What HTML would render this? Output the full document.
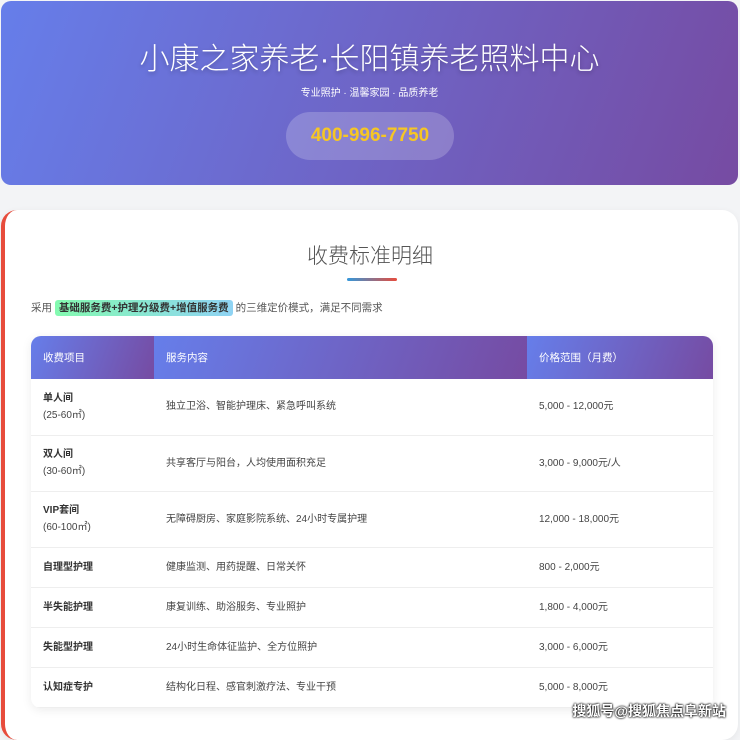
<!DOCTYPE html>
<html><head><meta charset="utf-8"><style>
*{margin:0;padding:0;box-sizing:border-box}
body{width:740px;height:726px;overflow:hidden;background:#f3f4f6;font-family:"Liberation Sans","Noto Sans CJK SC",sans-serif;position:relative}
.hero{position:absolute;left:1px;top:1px;width:737px;height:184px;border-radius:10px;background:linear-gradient(110deg,#667eea 0%,#764ba2 100%);text-align:center;color:#fff}
.hero h1{font-weight:300;font-size:30px;position:absolute;top:33px;left:0;right:0;text-shadow:0 2px 4px rgba(0,0,0,.25)}
.hero .sub{position:absolute;top:83px;left:0;right:0;font-size:10px}
.phone{position:absolute;left:285px;top:111px;width:168px;height:48px;border-radius:24px;background:rgba(255,255,255,.2);color:#f6c624;font-weight:bold;font-size:19px;line-height:48px}
.card{position:absolute;left:1px;top:210px;width:737px;height:530px;background:#fff;border-radius:16px;border-left:4px solid #e74c3c;box-shadow:0 2px 8px rgba(0,0,0,.06)}
.title{position:absolute;top:240px;left:0;width:740px;text-align:center;font-size:21px;color:#555;font-weight:300}
.line{position:absolute;top:278px;left:347px;width:50px;height:3px;border-radius:2px;background:linear-gradient(90deg,#3498db,#e74c3c)}
.intro{position:absolute;top:300px;left:31px;font-size:10.5px;color:#555;line-height:16px}
.hl{background:linear-gradient(90deg,#84fab0,#8fd3f4);padding:2px 4px;border-radius:3px;color:#333;font-weight:bold}
table{position:absolute;left:31px;top:336px;width:682px;border-collapse:collapse;box-shadow:0 2px 10px rgba(0,0,0,.08);border-radius:10px;overflow:hidden;font-size:10px;color:#444}
th{height:43px;text-align:left;color:#fff;font-weight:normal;font-size:10.5px;padding-left:12px;background:linear-gradient(110deg,#667eea,#764ba2)}
td{padding-left:12px;border-bottom:1px solid #eee;line-height:17px}
td b{color:#333}
tr.t td{height:56px}tr.s td{height:40px}
.wm{position:absolute;right:14px;top:701px;font-size:14px;color:#fff;font-weight:bold;text-shadow:0 0 2px #000,0 0 2px #000}
</style></head><body>
<div class="hero"><h1>小康之家养老·长阳镇养老照料中心</h1><div class="sub">专业照护 · 温馨家园 · 品质养老</div><div class="phone">400-996-7750</div></div>
<div class="card"></div>
<div class="title">收费标准明细</div><div class="line"></div>
<div class="intro">采用 <span class="hl">基础服务费+护理分级费+增值服务费</span> 的三维定价模式，满足不同需求</div>
<table>
<tr><th style="width:123px">收费项目</th><th style="width:373px">服务内容</th><th>价格范围（月费）</th></tr>
<tr class="t"><td><b>单人间</b><br>(25-60㎡)</td><td>独立卫浴、智能护理床、紧急呼叫系统</td><td>5,000 - 12,000元</td></tr>
<tr class="t"><td><b>双人间</b><br>(30-60㎡)</td><td>共享客厅与阳台，人均使用面积充足</td><td>3,000 - 9,000元/人</td></tr>
<tr class="t"><td><b>VIP套间</b><br>(60-100㎡)</td><td>无障碍厨房、家庭影院系统、24小时专属护理</td><td>12,000 - 18,000元</td></tr>
<tr class="s"><td><b>自理型护理</b></td><td>健康监测、用药提醒、日常关怀</td><td>800 - 2,000元</td></tr>
<tr class="s"><td><b>半失能护理</b></td><td>康复训练、助浴服务、专业照护</td><td>1,800 - 4,000元</td></tr>
<tr class="s"><td><b>失能型护理</b></td><td>24小时生命体征监护、全方位照护</td><td>3,000 - 6,000元</td></tr>
<tr class="s"><td><b>认知症专护</b></td><td>结构化日程、感官刺激疗法、专业干预</td><td>5,000 - 8,000元</td></tr>
</table>
<div class="wm">搜狐号@搜狐焦点阜新站</div>
</body></html>
